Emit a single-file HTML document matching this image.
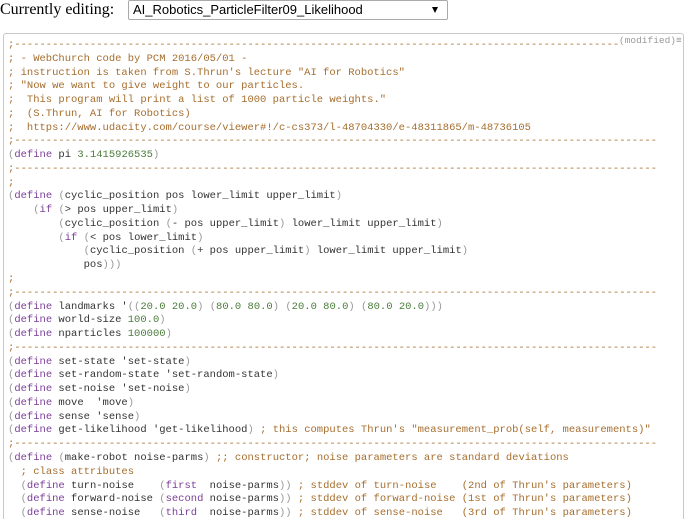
<!DOCTYPE html>
<html><head><meta charset="utf-8"><style>
html,body{margin:0;background:#fff;width:690px;height:519px;overflow:hidden;position:relative}
.hdr{position:absolute;left:0;top:0;font-family:"Liberation Serif",serif;font-size:16px;line-height:19px}
.sel{position:absolute;left:128px;top:0;width:318px;height:18px;border:1px solid #aaa;border-radius:2px;font-family:"Liberation Sans",sans-serif;font-size:13px;line-height:18px;box-sizing:content-box}
.sel span{position:absolute;left:4px;top:0}
.sel i{position:absolute;right:9px;top:6px;width:0;height:0;border-left:3.5px solid transparent;border-right:3.5px solid transparent;border-top:6px solid #000}
.box{position:absolute;left:3px;top:33px;width:681px;height:486px;border:1px solid #c8c8c8;border-bottom:none;border-radius:3px 3px 0 0;box-sizing:border-box}
pre{position:absolute;left:8px;top:39px;margin:0;font-family:"Liberation Mono",monospace;font-size:10.5px;line-height:13.76px;color:#333;height:480px;overflow:hidden}
.c{color:#a66e2e}.k{color:#7a3e98}.p{color:#999}.n{color:#4b7d3b}
.mod{position:absolute;left:619px;top:35px;font-family:"Liberation Mono",monospace;font-size:9.5px;color:#999;background:#fff}
</style></head><body>
<div class="hdr">Currently editing:</div>
<div class="sel"><span>AI_Robotics_ParticleFilter09_Likelihood</span><i></i></div>
<div class="box"></div>
<pre><span class="c">;------------------------------------------------------------------------------------------------------
; - WebChurch code by PCM 2016/05/01 -
; instruction is taken from S.Thrun's lecture "AI for Robotics"
; "Now we want to give weight to our particles.
;  This program will print a list of 1000 particle weights."
;  (S.Thrun, AI for Robotics)
;  https://www.udacity.com/course/viewer#!/c-cs373/l-48704330/e-48311865/m-48736105
;------------------------------------------------------------------------------------------------------</span>
<span class="p">(</span><span class="k">define</span> pi <span class="n">3.1415926535</span><span class="p">)</span>
<span class="c">;------------------------------------------------------------------------------------------------------
;</span>
<span class="p">(</span><span class="k">define</span> <span class="p">(</span>cyclic_position pos lower_limit upper_limit<span class="p">)</span>
    <span class="p">(</span><span class="k">if</span> <span class="p">(</span>&gt; pos upper_limit<span class="p">)</span>
        <span class="p">(</span>cyclic_position <span class="p">(</span>- pos upper_limit<span class="p">)</span> lower_limit upper_limit<span class="p">)</span>
        <span class="p">(</span><span class="k">if</span> <span class="p">(</span>&lt; pos lower_limit<span class="p">)</span>
            <span class="p">(</span>cyclic_position <span class="p">(</span>+ pos upper_limit<span class="p">)</span> lower_limit upper_limit<span class="p">)</span>
            pos<span class="p">)))</span>
<span class="c">;
;------------------------------------------------------------------------------------------------------</span>
<span class="p">(</span><span class="k">define</span> landmarks '<span class="p">((</span><span class="n">20.0 20.0</span><span class="p">)</span> <span class="p">(</span><span class="n">80.0 80.0</span><span class="p">)</span> <span class="p">(</span><span class="n">20.0 80.0</span><span class="p">)</span> <span class="p">(</span><span class="n">80.0 20.0</span><span class="p">)))</span>
<span class="p">(</span><span class="k">define</span> world-size <span class="n">100.0</span><span class="p">)</span>
<span class="p">(</span><span class="k">define</span> nparticles <span class="n">100000</span><span class="p">)</span>
<span class="c">;------------------------------------------------------------------------------------------------------</span>
<span class="p">(</span><span class="k">define</span> set-state 'set-state<span class="p">)</span>
<span class="p">(</span><span class="k">define</span> set-random-state 'set-random-state<span class="p">)</span>
<span class="p">(</span><span class="k">define</span> set-noise 'set-noise<span class="p">)</span>
<span class="p">(</span><span class="k">define</span> move  'move<span class="p">)</span>
<span class="p">(</span><span class="k">define</span> sense 'sense<span class="p">)</span>
<span class="p">(</span><span class="k">define</span> get-likelihood 'get-likelihood<span class="p">)</span> <span class="c">; this computes Thrun's "measurement_prob(self, measurements)"
;------------------------------------------------------------------------------------------------------</span>
<span class="p">(</span><span class="k">define</span> <span class="p">(</span>make-robot noise-parms<span class="p">)</span> <span class="c">;; constructor; noise parameters are standard deviations</span>
  <span class="c">; class attributes</span>
  <span class="p">(</span><span class="k">define</span> turn-noise    <span class="p">(</span><span class="k">first</span>  noise-parms<span class="p">))</span> <span class="c">; stddev of turn-noise    (2nd of Thrun's parameters)</span>
  <span class="p">(</span><span class="k">define</span> forward-noise <span class="p">(</span><span class="k">second</span> noise-parms<span class="p">))</span> <span class="c">; stddev of forward-noise (1st of Thrun's parameters)</span>
  <span class="p">(</span><span class="k">define</span> sense-noise   <span class="p">(</span><span class="k">third</span>  noise-parms<span class="p">))</span> <span class="c">; stddev of sense-noise   (3rd of Thrun's parameters)</span></pre>
<div class="mod">(modified)&#8801;</div>
</body></html>
